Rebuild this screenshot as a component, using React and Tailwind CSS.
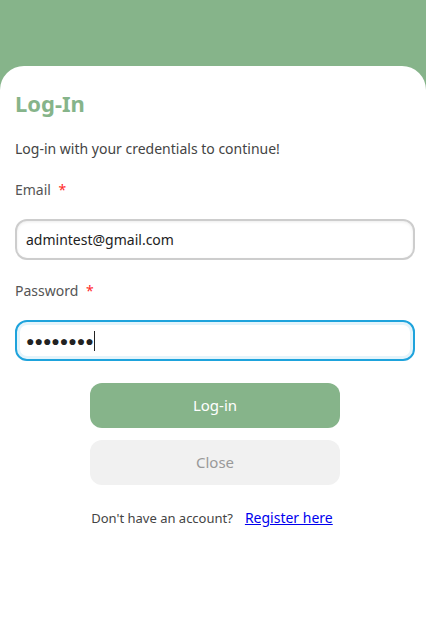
import React from "react";

const LoginSheet = () => {
  return (
    <div
      className="min-h-[630px] bg-[#86b48a] flex flex-col"
      style={{ fontFamily: '"Noto Sans", "Open Sans", sans-serif' }}
    >
      <div className="h-[66px]" />
      <div className="flex-1 bg-white rounded-t-[24px] pl-[15px] pr-[11px] pt-[23px]">
        <h1 className="text-[22px] font-bold text-[#86b48a] leading-[28px]">
          Log-In
        </h1>
        <p className="mt-[22px] text-[14px] text-[#444] leading-[20px]">
          Log-in with your credentials to continue!
        </p>

        <label className="block mt-[21px] text-[14px] text-[#555] leading-[20px]">
          Email <span className="text-[#ff2a2a] ml-[4px]">*</span>
        </label>
        <input
          type="text"
          defaultValue="admintest@gmail.com"
          className="mt-[19px] w-full h-[41px] rounded-[12px] border-2 border-[#cdcdcd] px-[9px] text-[14px] text-[#222] outline-none shadow-[inset_0_1px_3px_rgba(0,0,0,0.08)]"
        />

        <label className="block mt-[21px] text-[14px] text-[#555] leading-[20px]">
          Password <span className="text-[#ff2a2a] ml-[4px]">*</span>
        </label>
        <div className="mt-[19px] w-full h-[41px] rounded-[12px] border-2 border-[#1ea3dc] shadow-[inset_0_0_0_3px_rgba(30,163,220,0.12)] px-[9px] flex items-center">
          <span className="text-[14px] text-[#222]">●●●●●●●●</span>
          <span className="w-px h-[20px] bg-[#222]" />
        </div>

        <div className="flex flex-col items-center mt-[22px] gap-[12px]">
          <button className="w-[250px] h-[45px] rounded-[12px] bg-[#86b48a] text-white text-[15px]">
            Log-in
          </button>
          <button className="w-[250px] h-[45px] rounded-[12px] bg-[#f1f1f1] text-[#999] text-[15px]">
            Close
          </button>
        </div>

        <p className="mt-[22px] pr-[6px] text-center text-[13px] text-[#444]">
          Don't have an account?
          <a href="#" className="ml-[12px] text-[14px] text-[#0000ee] underline">
            Register here
          </a>
        </p>
      </div>
    </div>
  );
};

export default LoginSheet;
